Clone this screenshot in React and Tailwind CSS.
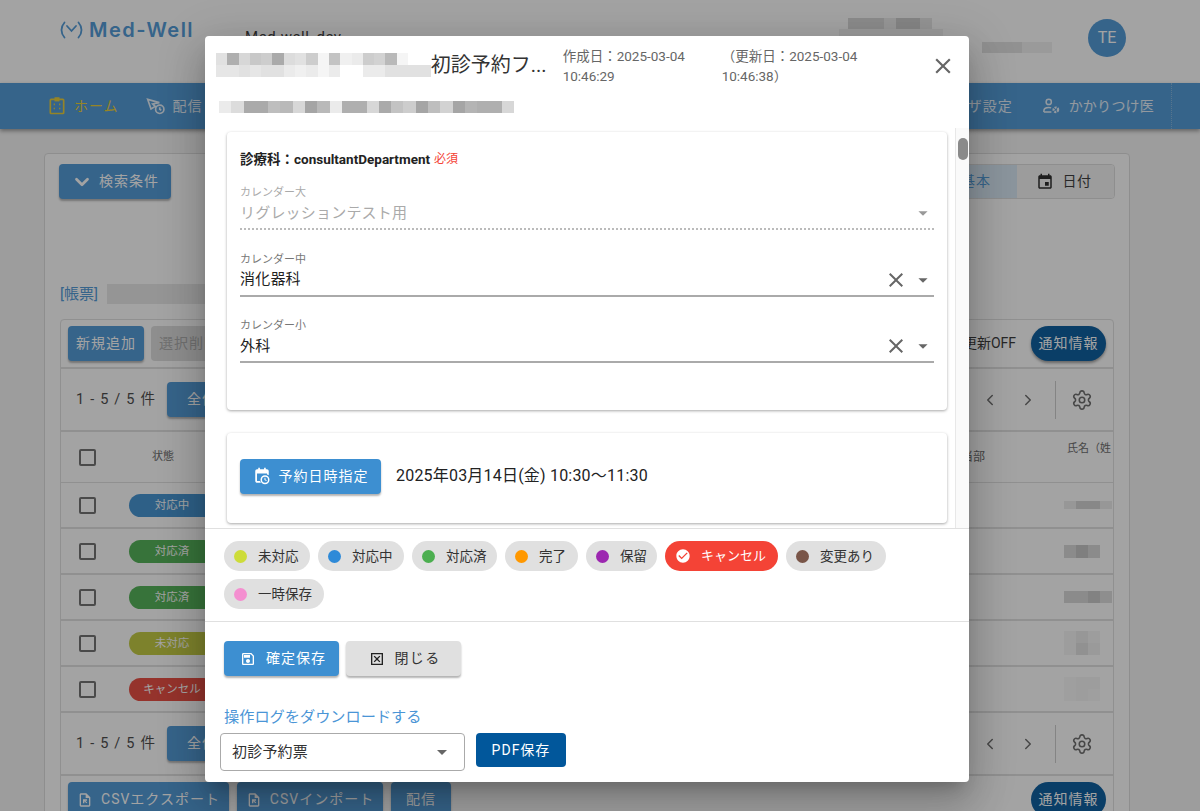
import React from 'react';
import { ChevronDown, ChevronLeft, ChevronRight, Settings } from 'lucide-react';

const FONT = "font-['Roboto','Noto_Sans_CJK_JP',sans-serif]";

// blurred-out text in the screenshot
const Mosaic = ({ rows, cell = 11, rowHeight = 12, className = '' }) => (
  <div className={`flex flex-col ${className}`}>
    {rows.map((row, i) => (
      <div key={i} className="flex">
        {row.map((v, j) => (
          <div key={j} style={{ width: cell, height: rowHeight, background: `rgb(${v},${v},${v})` }} />
        ))}
      </div>
    ))}
  </div>
);

const MuiIcon = ({ d, size = 24, className = '' }) => (
  <svg viewBox="0 0 24 24" width={size} height={size} fill="currentColor" className={`shrink-0 ${className}`}>
    <path d={d} />
  </svg>
);

const ICONS = {
  close: 'M19 6.41L17.59 5 12 10.59 6.41 5 5 6.41 10.59 12 5 17.59 6.41 19 12 13.41 17.59 19 19 17.59 13.41 12z',
  drop: 'M7 10l5 5 5-5z',
  check: 'M12 2C6.48 2 2 6.48 2 12s4.48 10 10 10 10-4.48 10-10S17.52 2 12 2zm-2 15l-5-5 1.41-1.41L10 14.17l7.59-7.59L19 8l-9 9z',
  save: 'M17 3H5c-1.11 0-2 .9-2 2v14c0 1.1.89 2 2 2h14c1.1 0 2-.9 2-2V7l-4-4zm2 16H5V5h11.17L19 7.83V19zm-7-7c-1.66 0-3 1.34-3 3s1.34 3 3 3 3-1.34 3-3-1.34-3-3-3zM6 6h9v4H6z',
  box: 'M19 19H5V5h14v14zM3 3v18h18V3H3zm14 5.4L15.6 7 12 10.6 8.4 7 7 8.4l3.6 3.6L7 15.6 8.4 17l3.6-3.6 3.6 3.6 1.4-1.4-3.6-3.6L17 8.4z',
  event: 'M17 12h-5v5h5v-5zM16 1v2H8V1H6v2H5c-1.11 0-1.99.9-1.99 2L3 19c0 1.1.89 2 2 2h14c1.1 0 2-.9 2-2V5c0-1.1-.9-2-2-2h-1V1h-2zm3 18H5V8h14v11z',
  file: 'M14 2H6c-1.1 0-2 .9-2 2v16c0 1.1.9 2 2 2h12c1.1 0 2-.9 2-2V8l-6-6zm4 18H6V4h7v5h5v11zM9 17h2v-3l3 3 1.4-1.4-3-2.6h2.6v-2H9v6z',
};

const PendingIcon = ({ size = 18 }) => (
  <svg viewBox="0 0 24 24" width={size} height={size} fill="currentColor" className="shrink-0">
    <path d="M7 1v2H5.5C4.1 3 3 4.1 3 5.5v13C3 19.9 4.1 21 5.5 21H10.6a6.5 6.5 0 0 1-1.2-2.2H5.3V8.5h13.4v1.6c.8.2 1.6.5 2.3 1V5.5C21 4.1 19.9 3 18.5 3H17V1h-2.2v2H9.2V1H7z" />
    <path d="M16 11a6 6 0 1 0 0 12 6 6 0 0 0 0-12zm0 10a4 4 0 1 1 0-8 4 4 0 0 1 0 8zm.6-6.6h-1.3v3l2.4 1.4.6-1-1.7-1v-2.4z" />
  </svg>
);

const ClipboardIcon = () => (
  <svg viewBox="0 0 24 24" width="20" height="20" fill="none" stroke="currentColor" strokeWidth="2" className="shrink-0">
    <rect x="4" y="4" width="16" height="17" rx="1" />
    <rect x="10" y="2.5" width="4" height="3" fill="currentColor" />
    <path d="M8 10h1.5M14.5 10H16M8 15h1.5M14.5 15H16" />
  </svg>
);

const DeliveryIcon = () => (
  <svg viewBox="0 0 24 24" width="20" height="20" fill="none" stroke="currentColor" strokeWidth="2" className="shrink-0">
    <path d="M2 4l14 4-8 1.5 3 3-5 3L2 4z" />
    <circle cx="16.5" cy="16" r="5" />
    <path d="M16.5 13.5V16l1.8 1" />
  </svg>
);

const UserGearIcon = () => (
  <svg viewBox="0 0 24 24" width="18" height="18" fill="none" stroke="currentColor" strokeWidth="2" className="shrink-0">
    <circle cx="9" cy="6.5" r="3.5" />
    <path d="M2.5 20v-1.5c0-3 3-4.5 6.5-4.5 1.2 0 2.3.2 3.2.5M2.5 20h10" />
    <circle cx="18.5" cy="17" r="3" strokeWidth="3" strokeDasharray="2.5 1.2" />
  </svg>
);

const LogoMark = () => (
  <svg viewBox="0 0 24 18" width="25" height="18" fill="none" stroke="#4a96d6" strokeWidth="1.8" strokeLinecap="round" className="shrink-0">
    <path d="M5 1.5C1 6 1 12 5 16.5" />
    <path d="M19 1.5c4 4.5 4 10.5 0 15" />
    <path d="M7.5 5l4.5 5 4.5-5" />
  </svg>
);

const Checkbox = () => <div className="h-[17px] w-[17px] shrink-0 rounded-[2px] border-2 border-[#6b6b6b]" />;

const BlueButton = ({ children, className = '', color = 'bg-[#3d8fd1]' }) => (
  <div className={`flex h-[35px] shrink-0 items-center justify-center rounded-[4px] text-[14px] tracking-[1px] text-white shadow-[0_2px_2px_rgba(0,0,0,0.3)] ${color} ${className}`}>
    {children}
  </div>
);

const BACK_BLUE = 'bg-[#4a96d6]';

const Pagination = () => (
  <div className="flex h-[63px] items-center border-b-2 border-[#e0e0e0]">
    <span className="ml-[15px] w-[91px] text-[14.5px] tracking-[1.2px] text-[#444]">1 - 5 / 5 件</span>
    <BlueButton color={BACK_BLUE} className="w-[70px]">全体</BlueButton>
    <ChevronLeft size={18} strokeWidth={2} className="ml-auto text-[#666]" />
    <ChevronRight size={18} strokeWidth={2} className="ml-[20px] text-[#666]" />
    <div className="ml-[18px] h-[38px] w-px bg-[#ccc]" />
    <Settings size={22} strokeWidth={1.7} className="ml-[15px] mr-[20px] text-[#666]" />
  </div>
);

const TABLE_ROWS = [
  { label: '対応中', color: 'bg-[#3d8fd1]', name: [[235, 210, 210, 235]], h: 8 },
  { label: '対応済', color: 'bg-[#4caf50]', name: [[215, 195, 215]], h: 13 },
  { label: '対応済', color: 'bg-[#4caf50]', name: [[215, 215, 200, 220]], h: 12 },
  { label: '未対応', color: 'bg-[#c0c93a]', name: [[245, 235, 245], [245, 225, 240]], h: 12 },
  { label: 'キャンセル', color: 'bg-[#e8453a]', name: [[248, 245, 245], [248, 245, 248]], h: 12 },
];

const STATUS_CHIPS = [
  { label: '未対応', dot: 'bg-[#cddc39]', width: 'w-[86px]' },
  { label: '対応中', dot: 'bg-[#2e8ad8]', width: 'w-[86px]' },
  { label: '対応済', dot: 'bg-[#4caf50]', width: 'w-[85px]' },
  { label: '完了', dot: 'bg-[#ff9800]', width: 'w-[73px]' },
  { label: '保留', dot: 'bg-[#9c27b0]', width: 'w-[71px]' },
  { label: 'キャンセル', active: true, width: 'w-[113px]' },
  { label: '変更あり', dot: 'bg-[#795548]', width: 'w-[100px]' },
  { label: '一時保存', dot: 'bg-[#f48fd0]', width: 'w-[100px]' },
];

const CalendarField = ({ label, value, disabled }) => (
  <div className={`border-b-2 ${disabled ? 'border-dotted border-[#bbb]' : 'border-[#aaa]'}`}>
    <div className={`h-4 text-[11px] leading-4 ${disabled ? 'text-[#aaa]' : 'text-[#777]'}`}>{label}</div>
    <div className="flex h-[27px] items-center pb-[3px]">
      <span className={`flex-1 text-[15px] tracking-[0.2px] ${disabled ? 'text-[#aaa]' : 'text-[#222]'}`}>{value}</span>
      {!disabled && <MuiIcon d={ICONS.close} size={24} className="mr-[4px] text-[#666]" />}
      <MuiIcon d={ICONS.drop} size={22} className={disabled ? 'text-[#999]' : 'text-[#666]'} />
    </div>
  </div>
);

const App = () => {
  return (
    <div className={`relative h-[811px] overflow-hidden bg-[#f5f5f5] text-[#333] ${FONT}`}>
      {/* Header */}
      <header className="flex h-[83px] bg-white">
        <div className="ml-[59px] mt-[21px] flex h-[18px] items-center gap-[5px]">
          <LogoMark />
          <span className="font-['Inter',sans-serif] text-[20px] font-semibold tracking-[1.5px] text-[#4a96d6]">Med-Well</span>
        </div>
        <span className="ml-[51px] mt-[26px] text-[15px] tracking-[0.5px] text-[#333]">Med-well_dev</span>
        <div className="ml-auto mr-[74px] flex">
          <div className="mr-[39px] mt-[18px]">
            <Mosaic rows={[[215, 215, 215, 235, 205, 205, 230]]} cell={12} rowHeight={11} />
            <div className="-ml-[9px] h-[7px] w-[104px] bg-[#f0f0f0]" />
          </div>
          <Mosaic rows={[[225, 225, 225, 225, 240, 240, 240]]} cell={10} rowHeight={11} className="mr-[36px] mt-[42px]" />
          <div className="mt-[19px] flex h-[38px] w-[38px] items-center justify-center rounded-full bg-[#4a96d6] text-[16px] text-white">TE</div>
        </div>
      </header>

      {/* Nav */}
      <nav className="flex h-[46px] items-center bg-[#4a96d6] pl-[47px] text-[14px] tracking-[1px] text-white/85 shadow-[0_2px_4px_rgba(0,0,0,0.4)]">
        <div className="flex items-center gap-[7px] text-[#e8cc30]">
          <ClipboardIcon />
          <span>ホーム</span>
        </div>
        <div className="ml-[27px] flex items-center gap-[7px]">
          <DeliveryIcon />
          <span>配信</span>
        </div>
        <span className="ml-auto">ユーザ設定</span>
        <div className="ml-[29px] flex items-center gap-[9px]">
          <UserGearIcon />
          <span className="tracking-[0.2px]">かかりつけ医</span>
        </div>
        <div className="ml-[17px] mr-[28px] h-full border-r border-dotted border-[#7fb3dd]" />
      </nav>

      {/* Page behind the dialog */}
      <main className="ml-[44px] mr-[70px] mt-[24px] rounded-t-[4px] border border-[#ddd] bg-white px-[15px] pt-[10px] pb-10">
        <div className="flex justify-between">
          <BlueButton color={BACK_BLUE} className="-ml-px w-[112px] gap-[6px]">
            <ChevronDown size={22} strokeWidth={3} />
            検索条件
          </BlueButton>
          <div className="mr-[-1px] flex h-[35px] w-[184px] overflow-hidden rounded-[4px] border border-[#ddd] text-[14px]">
            <div className="flex flex-1 items-center justify-end bg-[#d8e8f5] pr-[26px] tracking-[1px] text-[#4a96d6]">基本</div>
            <div className="flex w-[97px] items-center justify-center gap-[8px] bg-[#f4f4f4] pr-[3px] tracking-[0.6px]">
              <MuiIcon d={ICONS.event} size={18} className="text-[#222]" />
              日付
            </div>
          </div>
        </div>

        <div className="mt-[85px] flex h-[20px] items-center gap-[9px] text-[15px] text-[#4a96d6]">
          [帳票]
          <div className="h-[20px] w-[98px] bg-[#e8e8e8]" />
        </div>

        {/* Table */}
        <section className="mt-[15px] rounded-t-[4px] border border-[#e0e0e0]">
          <div className="flex h-[49px] items-center gap-[7px] border-b-2 border-[#e0e0e0] pl-[7px] pr-[7px]">
            <BlueButton color={BACK_BLUE} className="w-[76px]">新規追加</BlueButton>
            <div className="flex h-[35px] w-[76px] items-center justify-center rounded-[4px] bg-[#dcdcdc] text-[14px] tracking-[1px] text-[#aaa]">選択削除</div>
            <span className="ml-auto text-[14px]">自動更新OFF</span>
            <div className="ml-[8px] flex h-[35px] w-[75px] items-center justify-center rounded-full bg-[#01579b] text-[14px] tracking-[1px] text-white shadow-[0_2px_3px_rgba(0,0,0,0.4)]">通知情報</div>
          </div>
          <Pagination />
          <div className="flex h-[51px] items-center border-b border-[#e0e0e0] text-[11px] text-[#666]">
            <div className="ml-[18px]"><Checkbox /></div>
            <span className="ml-[56px]">状態</span>
            <span className="ml-auto mr-[71px] text-[12px]">担当部</span>
            <span className="mb-[16px] ml-[11px] w-[46px] whitespace-nowrap">氏名（姓</span>
          </div>
          {TABLE_ROWS.map((row, i) => (
            <div key={i} className="flex h-[46px] border-b-2 border-[#e0e0e0]">
              <div className="flex flex-1 items-center pt-px">
                <div className="ml-[18px]"><Checkbox /></div>
                <div className={`ml-[33px] flex h-[23px] w-[86px] items-center justify-center rounded-full text-[11.5px] text-white ${row.color}`}>{row.label}</div>
              </div>
              <div className="flex w-[57px] items-center pl-[8px]">
                <Mosaic rows={row.name} cell={12} rowHeight={row.h} />
              </div>
            </div>
          ))}
          <Pagination />
          <div className="flex h-[49px] items-start gap-[8px] pl-[7px] pr-[7px] pt-[6px]">
            <BlueButton color={BACK_BLUE} className="w-[161px] gap-[8px] tracking-[1.4px]"><MuiIcon d={ICONS.file} size={16} />CSVエクスポート</BlueButton>
            <BlueButton color={BACK_BLUE} className="w-[146px] gap-[8px] tracking-[1.4px]"><MuiIcon d={ICONS.file} size={16} />CSVインポート</BlueButton>
            <BlueButton color={BACK_BLUE} className="w-[60px]">配信</BlueButton>
            <div className="ml-auto flex h-[35px] w-[75px] items-center justify-center rounded-full bg-[#01579b] text-[14px] tracking-[1px] text-white">通知情報</div>
          </div>
        </section>
      </main>

      {/* Backdrop */}
      <div className="absolute inset-0 bg-[#181818]/40" />

      {/* Dialog */}
      <div className="absolute left-[205px] top-[36px] flex h-[746px] w-[764px] flex-col rounded-[4px] bg-white shadow-[0_11px_15px_-7px_rgba(0,0,0,0.2),0_24px_38px_3px_rgba(0,0,0,0.14),0_9px_46px_8px_rgba(0,0,0,0.12)]">
        <div className="flex h-[60px] shrink-0 pl-[11px] pt-[17px]">
          <Mosaic
            cell={11.3}
            rows={[
              [225, 175, 215, 200, 205, 170, 220, 225, 205, 245, 195, 240, 235, 205, 210, 185, 245, 255, 255],
              [230, 230, 225, 230, 225, 225, 235, 240, 235, 245, 235, 255, 255, 235, 235, 225, 225, 225, 225],
            ]}
          />
          <span className="w-[120px] whitespace-nowrap text-[20px] leading-[24px] text-[#333]">初診予約フ...</span>
          <div className="-mt-[7px] ml-[12px] w-[135px] text-[13.5px] leading-[20px] text-[#666]">作成日：2025-03-04 10:46:29</div>
          <div className="-mt-[7px] ml-[24px] w-[150px] text-[13.5px] leading-[20px] text-[#666]">（更新日：2025-03-04 10:46:38）</div>
          <MuiIcon d={ICONS.close} size={26} className="ml-auto mr-[13px] text-[#666]" />
        </div>

        <div className="h-[32px] shrink-0 pl-[14px] pt-[5px]">
          <Mosaic
            cell={12.3}
            rowHeight={12}
            rows={[[235, 220, 170, 170, 190, 185, 215, 165, 185, 235, 175, 175, 215, 170, 195, 205, 165, 190, 210, 165, 180, 175, 175, 215]]}
          />
        </div>

        {/* Scrollable body */}
        <div className="flex h-[401px] shrink-0 border-b border-[#e0e0e0]">
          <div className="flex-1 overflow-hidden pl-[22px] pr-[8px] pt-[4px]">
            <div className="h-[278px] rounded-[4px] bg-white px-[13px] pt-[18px] shadow-[0_1px_3px_rgba(0,0,0,0.35)]">
              <div className="flex h-[18px] items-center gap-[4px] text-[13.5px] font-bold text-[#222]">
                診療科：consultantDepartment
                <span className="text-[12px] font-normal text-[#f44336]">必須</span>
              </div>
              <div className="mt-[17px] flex flex-col gap-[21.5px]">
                <CalendarField label="カレンダー大" value="リグレッションテスト用" disabled />
                <CalendarField label="カレンダー中" value="消化器科" />
                <CalendarField label="カレンダー小" value="外科" />
              </div>
            </div>
            <div className="mt-[23px] flex h-[90px] items-center gap-[15px] rounded-[4px] bg-white px-[13px] pb-[4px] shadow-[0_1px_3px_rgba(0,0,0,0.35)]">
              <BlueButton className="w-[141px] gap-[8px] tracking-[0.7px]">
                <PendingIcon />
                予約日時指定
              </BlueButton>
              <span className="text-[16px] tracking-[0.2px] text-[#222]">2025年03月14日(金) 10:30〜11:30</span>
            </div>
          </div>
          <div className="w-[14px] border-l border-[#e8e8e8] bg-[#fafafa] pt-[10px]">
            <div className="ml-[2px] h-[22px] w-[10px] rounded-full bg-[#8a8a8a]" />
          </div>
        </div>

        {/* Status chips */}
        <div className="flex h-[93px] shrink-0 flex-wrap content-start gap-[8px] border-b border-[#e0e0e0] pl-[19px] pr-[20px] pt-[12px]">
          {STATUS_CHIPS.map((chip) => (
            <div
              key={chip.label}
              className={`flex h-[30px] items-center rounded-full pl-[10px] ${chip.width} ${chip.active ? 'gap-[10px] bg-[#f44336] text-[13px] text-white' : 'gap-[11px] bg-[#e0e0e0] text-[13.5px] text-[#333]'}`}
            >
              {chip.active ? (
                <MuiIcon d={ICONS.check} size={16} className="text-white" />
              ) : (
                <span className={`h-[13px] w-[13px] shrink-0 rounded-full ${chip.dot}`} />
              )}
              <span>{chip.label}</span>
            </div>
          ))}
        </div>

        {/* Actions */}
        <div className="flex gap-[7px] pl-[19px] pt-[19px]">
          <BlueButton className="w-[115px] gap-[10px] pl-[3px]">
            <MuiIcon d={ICONS.save} size={16} />
            確定保存
          </BlueButton>
          <div className="flex h-[35px] w-[115px] items-center justify-center gap-[9px] rounded-[4px] bg-[#e0e0e0] pl-[3px] text-[14px] tracking-[1.4px] text-[#333] shadow-[0_2px_2px_rgba(0,0,0,0.3)]">
            <MuiIcon d={ICONS.box} size={16} className="text-[#222]" />
            閉じる
          </div>
        </div>
        <span className="ml-[19px] mt-[31px] h-[20px] text-[15.2px] leading-[20px] text-[#4a95d6]">操作ログをダウンロードする</span>
        <div className="ml-[15px] mt-[6px] flex items-start gap-[11px]">
          <div className="flex h-[38px] w-[245px] items-center justify-between rounded-[4px] border border-[#aaa] pl-[11px] pr-[10px] text-[15px] tracking-[0.2px] text-[#333]">
            初診予約票
            <MuiIcon d={ICONS.drop} size={24} className="text-[#666]" />
          </div>
          <div className="flex h-[34px] w-[90px] items-center justify-center rounded-[4px] bg-[#01579b] text-[14px] tracking-[1px] text-white">PDF保存</div>
        </div>
      </div>
    </div>
  );
};

export default App;
